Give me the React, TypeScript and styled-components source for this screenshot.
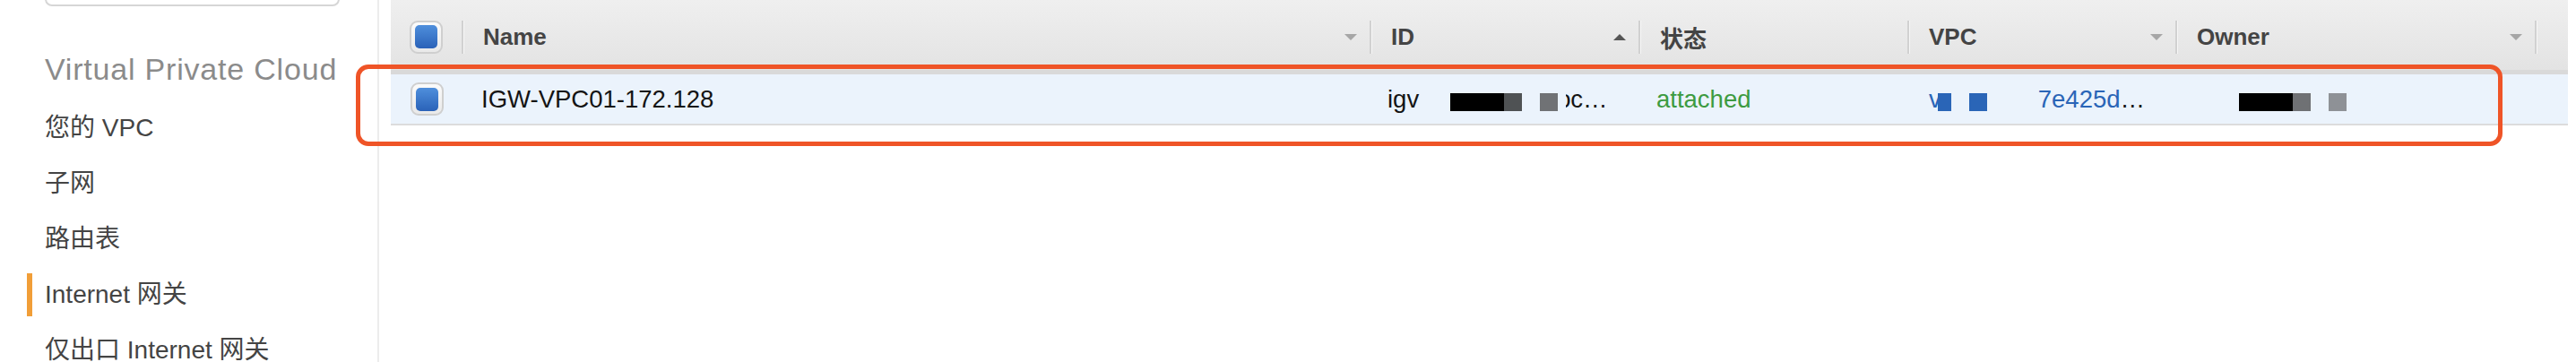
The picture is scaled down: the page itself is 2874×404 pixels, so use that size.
import React from "react";
import styled, { createGlobalStyle } from "styled-components";

const GlobalStyle = createGlobalStyle`
  *, *::before, *::after { box-sizing: border-box; }
  html, body { margin: 0; padding: 0; background: #ffffff; }
  body {
    font-family: "Liberation Sans", Arial, "Noto Sans CJK SC", sans-serif;
    -webkit-font-smoothing: antialiased;
  }
`;

const COLS = "79px 1013px 300px 300px 299px 401px 37px";

const Page = styled.div`
  position: relative;
  display: flex;
  width: 2874px;
  height: 404px;
  overflow: hidden;
  background: #fff;
`;

const Sidebar = styled.aside`
  flex: none;
  width: 423px;
  height: 100%;
  border-right: 2px solid #ececec;
  padding-left: 50px;
`;

const SearchBox = styled.div`
  width: 329px;
  height: 44px;
  margin-top: -37px;
  border: 2px solid #d6d6d6;
  border-radius: 8px;
  background: #fff;
`;

const SideHeading = styled.h2`
  margin: 50px 0 0;
  font-size: 34px;
  line-height: 40px;
  font-weight: 400;
  letter-spacing: 0.8px;
  color: #8b8b8b;
  white-space: nowrap;
`;

const NavList = styled.ul`
  list-style: none;
  margin: 15px 0 0 -20px;
  padding: 0;
`;

const NavItem = styled.li`
  display: flex;
  align-items: center;
  height: 62px;
  font-size: 28px;
  line-height: 62px;
  color: #444;
  white-space: nowrap;
`;

const Marker = styled.span<{ $active?: boolean }>`
  flex: none;
  width: 6px;
  height: 48px;
  margin-right: 14px;
  background: ${(p) => (p.$active ? "#f19e38" : "transparent")};
`;

const Main = styled.main`
  flex: 1;
  padding-left: 13px;
  padding-right: 9px;
`;

const Table = styled.div`
  width: 2429px;
`;

const HeaderRow = styled.div`
  display: grid;
  grid-template-columns: ${COLS};
  align-items: center;
  height: 83px;
  padding-top: 4px;
  background: linear-gradient(#efefef, #e3e3e3);
  border-bottom: 5px solid #d9d9d9;
`;

const HeaderCell = styled.div<{ $first?: boolean }>`
  display: flex;
  align-items: center;
  justify-content: space-between;
  height: 37px;
  padding: 0 14px 0 ${(p) => (p.$first ? "21px" : "22px")};
  border-left: ${(p) => (p.$first ? "none" : "2px solid #d1d1d1")};
  box-shadow: ${(p) => (p.$first ? "none" : "inset 1px 0 0 #f7f7f7")};
  font-size: 26px;
  font-weight: 700;
  color: #444;
  white-space: nowrap;
`;

const SortArrow = styled.span<{ $up?: boolean }>`
  flex: none;
  width: 0;
  height: 0;
  border-left: 7px solid transparent;
  border-right: 7px solid transparent;
  ${(p) =>
    p.$up
      ? "border-bottom: 7px solid #555;"
      : "border-top: 7px solid #a6a6a6;"}
`;

const DataRow = styled.div`
  display: grid;
  grid-template-columns: ${COLS};
  align-items: center;
  height: 57px;
  background: #ebf3fc;
  border-bottom: 2px solid #dcdcdc;
`;

const DataCell = styled.div<{ $pad?: number }>`
  display: block;
  padding-left: ${(p) => p.$pad ?? 20}px;
  font-size: 27.5px;
  line-height: 32px;
  color: #141414;
  white-space: nowrap;
  overflow: hidden;
`;

const CheckboxCell = styled.div<{ $pad: number }>`
  display: flex;
  align-items: center;
  padding-left: ${(p) => p.$pad}px;
`;

const Checkbox = styled.span`
  display: flex;
  align-items: center;
  justify-content: center;
  width: 37px;
  height: 37px;
  border-radius: 9px;
  border: 2px solid #cfcfcf;
  background: linear-gradient(#fbfbfb, #e9e9e9);
`;

const CheckboxFill = styled.span`
  width: 25px;
  height: 26px;
  border-radius: 5px;
  background: linear-gradient(#4f8fdc, #2a62b8);
`;

const Mask = styled.span<{ $w: number; $color: string; $ml?: number }>`
  display: inline-block;
  width: ${(p) => p.$w}px;
  height: 20px;
  margin-left: ${(p) => p.$ml ?? 0}px;
  background: ${(p) => p.$color};
  vertical-align: -4px;
`;

const Sliver = styled.span<{ $ml?: number }>`
  display: inline-block;
  width: 5px;
  margin-left: ${(p) => p.$ml ?? 0}px;
  overflow: hidden;
  vertical-align: top;
  line-height: 32px;
`;

const SliverGlyph = styled.span`
  display: inline-block;
  margin-left: -10px;
`;

const StatusText = styled.span`
  color: #3d9b41;
`;

const LinkText = styled.span<{ $ml?: number }>`
  color: #2a65b7;
  margin-left: ${(p) => p.$ml ?? 0}px;
`;

const Annotation = styled.div`
  position: absolute;
  left: 397px;
  top: 72px;
  width: 2395px;
  height: 91px;
  border: 5.5px solid #ef5427;
  border-radius: 14px;
  pointer-events: none;
`;

const navItems = [
  { label: "您的 VPC" },
  { label: "子网" },
  { label: "路由表" },
  { label: "Internet 网关", active: true },
  { label: "仅出口 Internet 网关" },
];

const columns: { label: string; arrow?: "up" | "down" }[] = [
  { label: "Name", arrow: "down" },
  { label: "ID", arrow: "up" },
  { label: "状态" },
  { label: "VPC", arrow: "down" },
  { label: "Owner", arrow: "down" },
];

export default function App() {
  return (
    <>
      <GlobalStyle />
      <Page>
        <Sidebar>
          <SearchBox />
          <SideHeading>Virtual Private Cloud</SideHeading>
          <NavList>
            {navItems.map((item) => (
              <NavItem key={item.label}>
                <Marker $active={item.active} />
                {item.label}
              </NavItem>
            ))}
          </NavList>
        </Sidebar>
        <Main>
          <Table>
            <HeaderRow>
              <HeaderCell $first>
                <Checkbox>
                  <CheckboxFill />
                </Checkbox>
              </HeaderCell>
              {columns.map((c) => (
                <HeaderCell key={c.label}>
                  <span>{c.label}</span>
                  {c.arrow && <SortArrow $up={c.arrow === "up"} />}
                </HeaderCell>
              ))}
              <HeaderCell />
            </HeaderRow>
            <DataRow>
              <CheckboxCell $pad={22}>
                <Checkbox>
                  <CheckboxFill />
                </Checkbox>
              </CheckboxCell>
              <DataCell $pad={22}>IGW-VPC01-172.128</DataCell>
              <DataCell>
                igv
                <Mask $w={60} $color="#000" $ml={35} />
                <Mask $w={20} $color="#4f5254" />
                <Mask $w={20} $color="#707275" $ml={20} />
                <Sliver $ml={9}>
                  <SliverGlyph>o</SliverGlyph>
                </Sliver>
                c…
              </DataCell>
              <DataCell>
                <StatusText>attached</StatusText>
              </DataCell>
              <DataCell $pad={24}>
                <LinkText>v</LinkText>
                <Mask $w={15} $color="#2a65b7" $ml={-4} />
                <Mask $w={20} $color="#2a65b7" $ml={20} />
                <LinkText $ml={57}>7e425d</LinkText>…
              </DataCell>
              <DataCell $pad={71}>
                <Mask $w={60} $color="#000" />
                <Mask $w={20} $color="#6f7174" />
                <Mask $w={20} $color="#8e9196" $ml={20} />
              </DataCell>
              <DataCell />
            </DataRow>
          </Table>
        </Main>
        <Annotation />
      </Page>
    </>
  );
}
